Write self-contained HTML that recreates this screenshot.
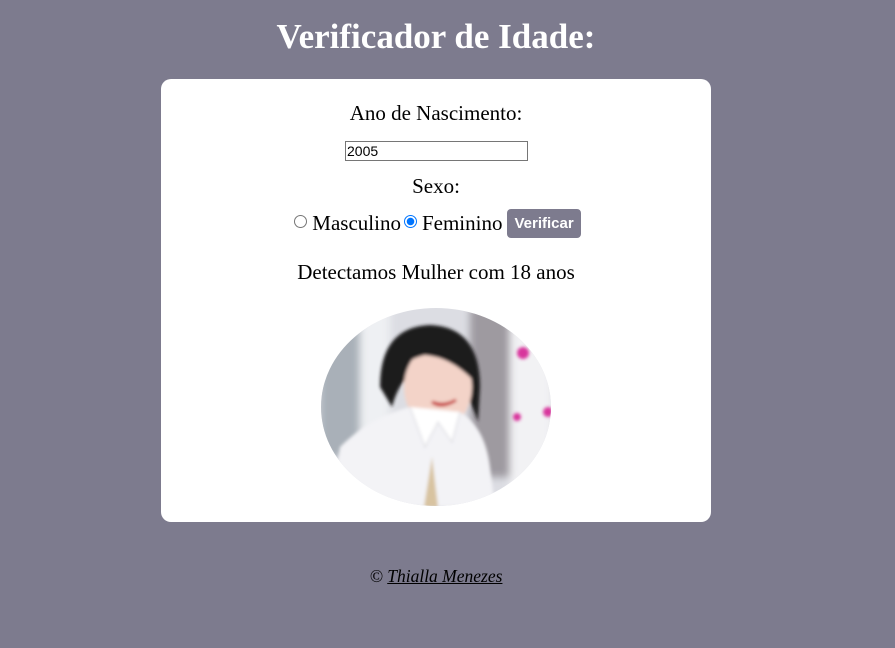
<!DOCTYPE html>
<html><head><meta charset="utf-8"><style>
html,body{margin:0;padding:0}
body{width:895px;height:648px;background:#7d7b8e;font-family:"Liberation Serif",serif;position:relative;overflow:hidden}
h1{position:absolute;top:17px;left:0;width:872px;margin:0;text-align:center;color:#fff;font-size:35px;font-weight:bold}
.card{position:absolute;left:161px;top:79px;width:550px;height:443px;background:#fff;border-radius:10px}
.t{position:absolute;left:0;width:550px;text-align:center;font-size:21px;color:#000;white-space:nowrap}
input[type=text]{position:absolute;left:184px;top:62px;width:183px;height:20px;box-sizing:border-box;border:1px solid #767676;font-family:"Liberation Sans",sans-serif;font-size:14px;padding:0 1px;margin:0}
.rad{display:inline-block;width:13px;height:13px;border-radius:50%;box-sizing:border-box;border:1px solid #767676;vertical-align:2px;margin:0 5px 0 3px}
.rad.on{border:1px solid #0075ff;background:radial-gradient(circle,#0075ff 0 3.5px,#fff 4px)}
.btn{display:inline-block;background:#7d7b8e;color:#fff;font-family:"Liberation Sans",sans-serif;font-weight:bold;font-size:15px;padding:6px 7px 6px 7px;border-radius:4px;vertical-align:2px;margin-left:5px;line-height:17px}
.foot{position:absolute;top:566px;left:0;width:872px;text-align:center;font-style:italic;font-size:17.5px;color:#000}
.foot u{text-decoration:underline}
</style></head><body>
<h1>Verificador de Idade:</h1>
<div class="card">
<div class="t" style="top:22px">Ano de Nascimento:</div>
<input type="text" value="2005">
<div class="t" style="top:95px">Sexo:</div>
<div class="t" style="top:130px"><span class="rad"></span>Masculino<span class="rad on"></span>Feminino<span class="btn">Verificar</span></div>
<div class="t" style="top:181px">Detectamos Mulher com 18 anos</div>
<svg style="position:absolute;left:159px;top:228px" width="232" height="200" viewBox="0 0 232 200">
<defs><clipPath id="c"><ellipse cx="116" cy="100" rx="115" ry="99"/></clipPath>
<filter id="b"><feGaussianBlur stdDeviation="4"/></filter><filter id="b2"><feGaussianBlur stdDeviation="1.5"/></filter></defs>
<g clip-path="url(#c)">
<rect width="232" height="200" fill="#dcdde3"/>
<g filter="url(#b)">
<rect x="0" y="20" width="40" height="130" fill="#a9b0b8"/>
<rect x="40" y="0" width="30" height="200" fill="#eef0f3"/>
<rect x="150" y="0" width="40" height="170" fill="#9e9aa0"/>
<rect x="190" y="0" width="42" height="200" fill="#f2f2f4"/>
</g>
<g filter="url(#b2)">
<circle cx="203" cy="46" r="6" fill="#d8349c"/><circle cx="197" cy="110" r="4" fill="#d8349c"/><circle cx="228" cy="105" r="5" fill="#d8349c"/>
<path d="M60 80 Q60 20 110 18 Q160 20 160 80 L158 115 Q140 60 110 60 Q82 62 72 100 Z" fill="#1e1a1e"/>
<ellipse cx="118" cy="80" rx="34" ry="42" fill="#f3d3c8"/>
<path d="M75 70 Q78 30 115 28 Q150 32 152 72 Q130 50 105 48 Q85 52 75 70Z" fill="#1e1a1e"/>
<path d="M112 95 Q122 102 136 93 Q124 100 112 95Z" fill="#d04a4a" stroke="#c83f3f" stroke-width="3"/>
<path d="M10 200 L20 140 Q50 110 90 100 L140 105 Q165 120 170 160 L175 200Z" fill="#f3f3f6"/>
<path d="M90 100 L105 140 L118 115 L132 135 L140 105" fill="#fff" stroke="#d8d8de"/>
<path d="M112 150 L118 200 L104 200Z" fill="#d8c3a0"/>
</g>
</g>
</svg>
</div>
<div class="foot">© <u>Thialla Menezes</u></div>
</body></html>
